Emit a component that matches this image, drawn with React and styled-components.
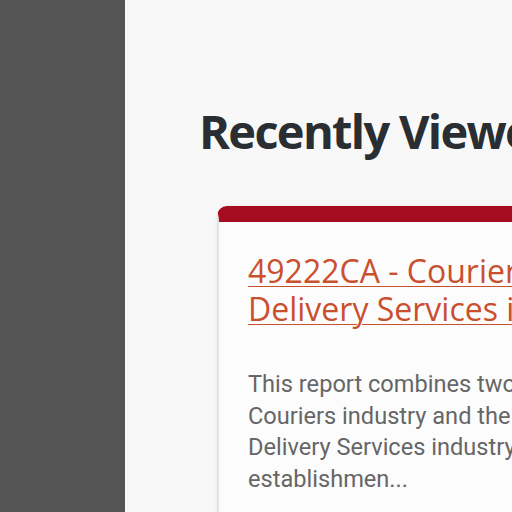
import styled, { createGlobalStyle } from "styled-components";

const GlobalStyle = createGlobalStyle`
  html, body {
    margin: 0;
    padding: 0;
    height: 100%;
    overflow: hidden;
    background: #f8f8f8;
  }
  #root {
    height: 100%;
  }
`;

const Layout = styled.div`
  display: flex;
  height: 100%;
  width: 100%;
`;

const Sidebar = styled.aside`
  flex: 0 0 125px;
  background-color: #555555;
`;

const Main = styled.main`
  flex: 1;
  min-width: 0;
  padding: 100px 0 0 74px;
  overflow: hidden;
`;

const Heading = styled.h1`
  margin: 0 0 44px;
  white-space: nowrap;

  font-family: "Open Sans", sans-serif;
  font-weight: 700;
  font-size: 47px;
  line-height: 62px;
  letter-spacing: -1.7px;

  color: #2a2d31;
`;

const Card = styled.div`
  margin-left: 18px;
  width: 720px;
  padding: 30px 29px 40px;

  background-color: #fcfcfc;
  border-top: 16px solid #a50c1f;
  border-left: 2px solid #e2e2e2;
  border-radius: 10px 10px 0 0;
  box-shadow: 0 1px 4px rgba(0, 0, 0, 0.08);
`;

const CardTitle = styled.a`
  display: block;
  margin-bottom: 41px;

  font-family: "Open Sans", sans-serif;
  font-weight: 400;
  font-size: 32px;
  line-height: 38px;

  color: #c9502f;
  text-decoration: underline;
  text-underline-offset: 3px;
  text-decoration-thickness: 1px;
`;

const CardText = styled.p`
  margin: 0;

  font-family: Roboto, sans-serif;
  font-size: 23.6px;
  line-height: 31.5px;

  color: #666666;
`;

const App = () => {
  return (
    <>
      <GlobalStyle />
      <Layout>
        <Sidebar />
        <Main>
          <Heading>Recently Viewed Reports</Heading>
          <Card>
            <CardTitle href="#">
              49222CA - Couriers and Local
              <br />
              Delivery Services in Canada
            </CardTitle>
            <CardText>
              This report combines two industries, the
              <br />
              Couriers industry and the Local Messengers
              <br />
              Delivery Services industry. Operators are
              <br />
              establishmen...
            </CardText>
          </Card>
        </Main>
      </Layout>
    </>
  );
};

export default App;
